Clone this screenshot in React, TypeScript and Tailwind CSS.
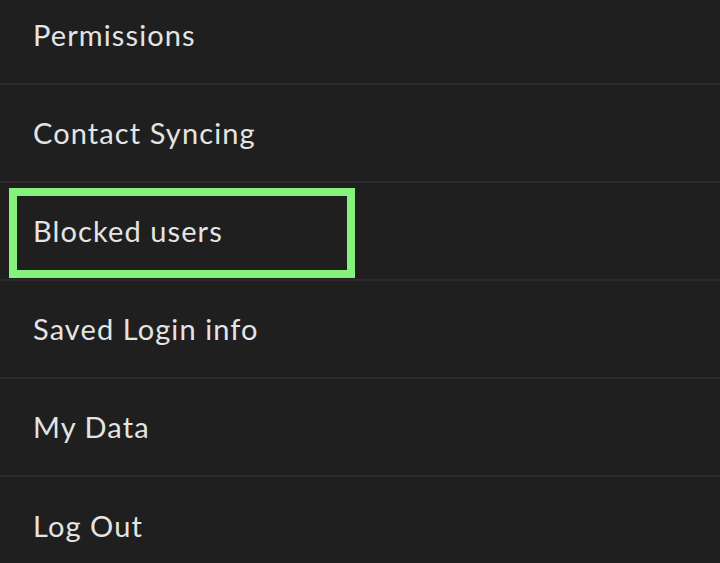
const items = [
  "Permissions",
  "Contact Syncing",
  "Blocked users",
  "Saved Login info",
  "My Data",
  "Log Out",
];

export default function App() {
  return (
    <div
      className="relative w-[720px] h-[563px] overflow-hidden bg-[#1f1f1f]"
      style={{ fontFamily: "Lato, 'Noto Sans', sans-serif" }}
    >
      <ul className="-mt-[13px]">
        {items.map((label, i) => (
          <li
            key={label}
            className={
              "relative flex h-[98px] items-center pl-[33px] text-[29px] tracking-[1.1px] text-[#e4e4e4] " +
              (i < items.length - 1 ? "border-b-2 border-[#2b2b2b]" : "")
            }
          >
            {label}
            {label === "Blocked users" && (
              <div className="absolute left-[9px] top-[5px] h-[90px] w-[346px] border-[8px] border-[#87f27b]" />
            )}
          </li>
        ))}
      </ul>
    </div>
  );
}
